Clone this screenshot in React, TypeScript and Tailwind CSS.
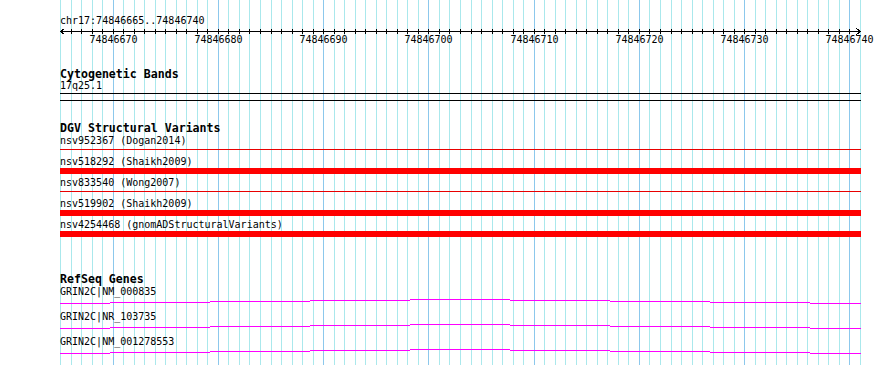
import React from "react";

const BP = 800 / 76;
const gx = (i: number) => Math.round(60 + i * BP);
const idx = Array.from({ length: 77 }, (_, i) => i);

const dgv = [
  { label: "nsv952367 (Dogan2014)", thick: false },
  { label: "nsv518292 (Shaikh2009)", thick: true },
  { label: "nsv833540 (Wong2007)", thick: false },
  { label: "nsv519902 (Shaikh2009)", thick: true },
  { label: "nsv4254468 (gnomADStructuralVariants)", thick: true },
];

const genes = ["GRIN2C|NM_000835", "GRIN2C|NR_103735", "GRIN2C|NM_001278553"];

const segs: [number, number, number][] = [
  [0, 50, 4],
  [50, 150, 3],
  [150, 250, 2],
  [250, 350, 1],
  [350, 450, 0],
  [450, 550, 1],
  [550, 650, 2],
  [650, 750, 3],
  [750, 801, 4],
];

function Grid() {
  return (
    <svg className="absolute left-0 top-0" width={890} height={365} shapeRendering="crispEdges">
      {idx.map((i) => (
        <rect
          key={i}
          x={gx(i)}
          y={0}
          width={1}
          height={365}
          fill={i % 10 === 5 ? "#8cc8ec" : "#aae8ec"}
        />
      ))}
    </svg>
  );
}

function Ruler() {
  return (
    <svg width={801} height={8} shapeRendering="crispEdges" className="mt-[1px] block">
      <rect x={0} y={4} width={801} height={1} fill="#000" />
      {idx.slice(1, 76).map((i) => (
        <rect key={i} x={gx(i) - 60} y={2} width={1} height={5} fill="#000" />
      ))}
      <polyline points="4.5,1.5 0.5,4.5 4.5,7.5" fill="none" stroke="#000" strokeWidth={1} />
      <polyline points="796.5,1.5 800.5,4.5 796.5,7.5" fill="none" stroke="#000" strokeWidth={1} />
    </svg>
  );
}

function RulerLabels() {
  const majors = [5, 15, 25, 35, 45, 55, 65, 75];
  return (
    <div className="relative h-[10px] w-[801px] text-[10px] leading-[10px]">
      {majors.map((i) => (
        <span
          key={i}
          className="absolute top-0 -translate-x-1/2 whitespace-nowrap"
          style={{ left: gx(i) - 60 + 0.5 }}
        >
          {74846665 + i}
        </span>
      ))}
    </div>
  );
}

function GeneLine() {
  return (
    <svg width={801} height={5} shapeRendering="crispEdges" className="mt-[2px] block">
      {segs.map(([a, b, y], k) => (
        <rect key={k} x={a} y={y} width={b - a} height={1} fill="#ff00ff" />
      ))}
    </svg>
  );
}

export default function App() {
  return (
    <div className="relative w-[890px] h-[365px] overflow-hidden bg-white text-black font-['DejaVu_Sans_Mono',monospace]">
      <Grid />
      <div className="relative flex flex-col pl-[60px] pt-[16px]">
        <div className="h-[10px] text-[10px] leading-[10px] whitespace-nowrap">chr17:74846665..74846740</div>
        <Ruler />
        <RulerLabels />

        <div className="mt-[23px] h-[12px] text-[11.6px] leading-[12px] font-bold whitespace-nowrap">
          Cytogenetic Bands
        </div>
        <div className="mt-[1px] h-[10px] text-[10px] leading-[10px]">17q25.1</div>
        <div className="mt-[2px] h-[8px] w-[801px] border-y border-black" />

        <div className="mt-[21px] h-[12px] text-[11.6px] leading-[12px] font-bold whitespace-nowrap">
          DGV Structural Variants
        </div>
        <div className="mt-[2px] flex flex-col">
          {dgv.map((r) => (
            <div key={r.label} className="flex h-[21px] flex-col">
              <div className="h-[10px] text-[10px] leading-[10px] whitespace-nowrap">{r.label}</div>
              {r.thick ? (
                <div className="mt-[1px] h-[6px] w-[801px] bg-[#ff0000]" />
              ) : (
                <div className="mt-[3px] h-[1px] w-[801px] bg-[#e80000]" />
              )}
            </div>
          ))}
        </div>

        <div className="mt-[32px] h-[12px] text-[11.6px] leading-[12px] font-bold whitespace-nowrap">
          RefSeq Genes
        </div>
        <div className="mt-[2px] flex flex-col">
          {genes.map((g) => (
            <div key={g} className="flex h-[25px] flex-col">
              <div className="h-[10px] text-[10px] leading-[10px] whitespace-nowrap">{g}</div>
              <GeneLine />
            </div>
          ))}
        </div>
      </div>
    </div>
  );
}
